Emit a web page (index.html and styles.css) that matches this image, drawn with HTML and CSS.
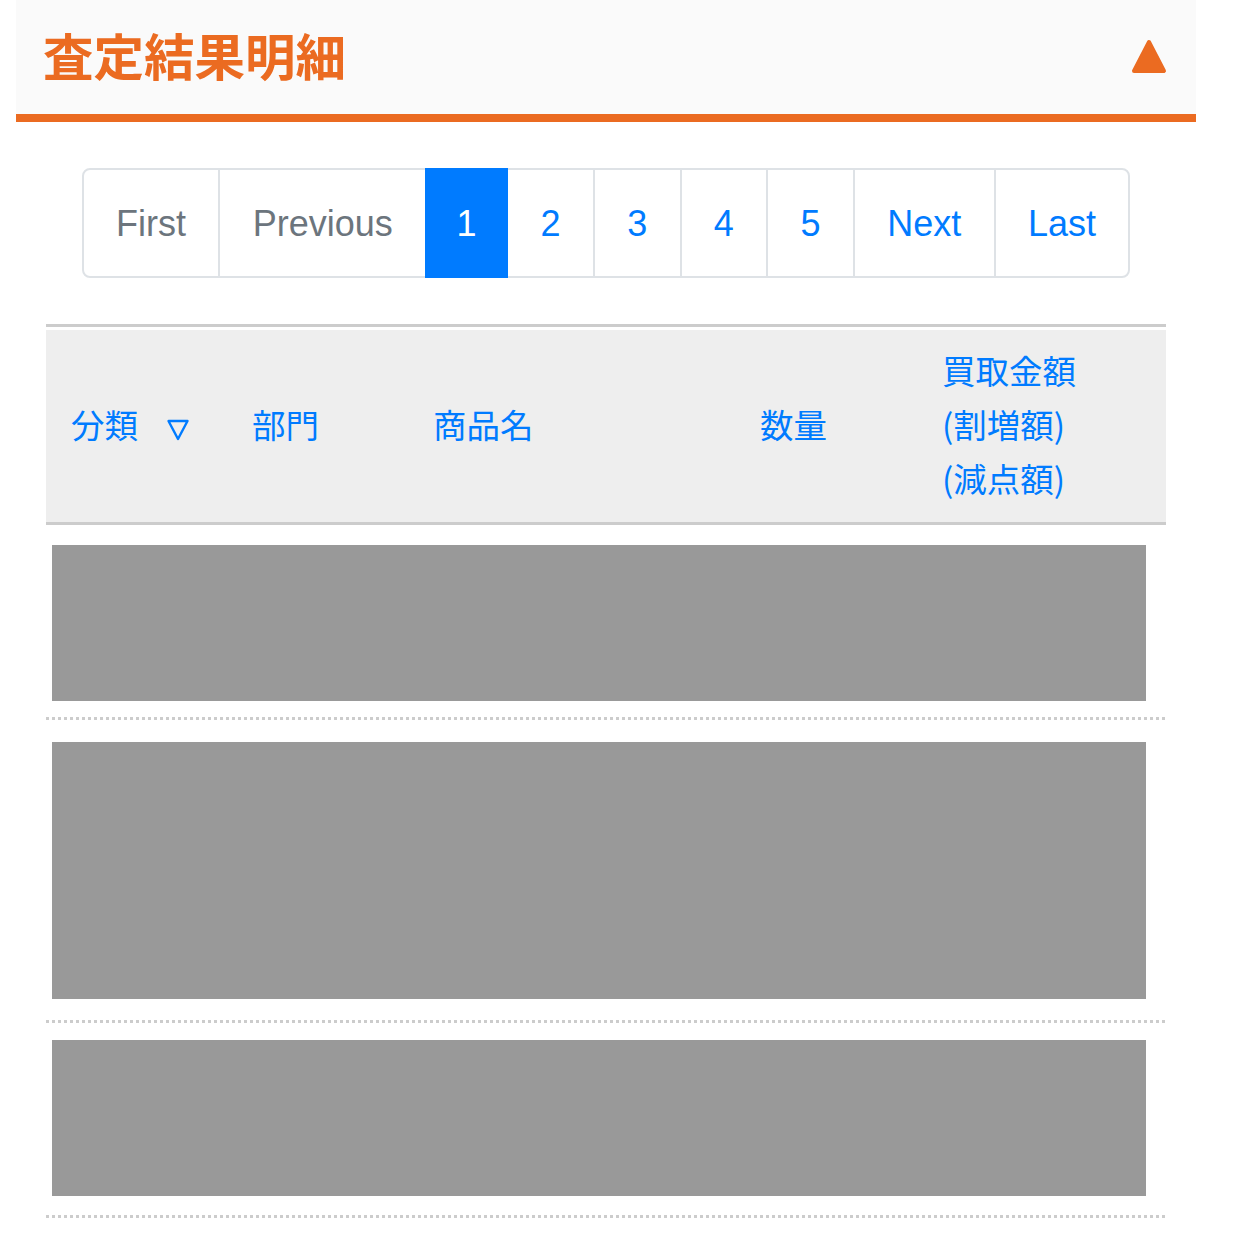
FILE: index.html
```html
<!DOCTYPE html>
<html lang="ja">
<head>
<meta charset="utf-8">
<title>査定結果明細</title>
<link rel="stylesheet" href="styles.css">
</head>
<body>
<div class="page">
  <div class="panel-head">
    <h2 class="panel-title">査定結果明細</h2>
    <svg class="toggle" width="36" height="36" viewBox="0 0 36 36" aria-hidden="true">
      <polygon points="18,4 33,33 3,33" fill="#eb6b21" stroke="#eb6b21" stroke-width="4" stroke-linejoin="round"/>
    </svg>
  </div>

  <nav class="pager-wrap">
    <ul class="pager">
      <li class="page-item disabled first"><span class="page-link">First</span></li>
      <li class="page-item disabled"><span class="page-link">Previous</span></li>
      <li class="page-item active"><span class="page-link">1</span></li>
      <li class="page-item"><span class="page-link">2</span></li>
      <li class="page-item"><span class="page-link">3</span></li>
      <li class="page-item"><span class="page-link">4</span></li>
      <li class="page-item"><span class="page-link">5</span></li>
      <li class="page-item"><span class="page-link">Next</span></li>
      <li class="page-item last"><span class="page-link">Last</span></li>
    </ul>
  </nav>

  <div class="table">
    <div class="thead">
      <div class="thead-row">
        <div class="th">分類<svg class="sort" width="24" height="24" viewBox="0 0 24 24" aria-hidden="true"><polygon points="2.5,3 21.5,3 12,21" fill="none" stroke="#007bff" stroke-width="2.4" stroke-linejoin="round"/></svg></div>
        <div class="th">部門</div>
        <div class="th">商品名</div>
        <div class="th">数量</div>
        <div class="th multi">買取金額<br>(割増額)<br>(減点額)</div>
      </div>
    </div>
    <div class="tbody">
      <div class="row row-a"><div class="placeholder ph-short"></div></div>
      <div class="row row-b"><div class="placeholder ph-tall"></div></div>
      <div class="row row-c"><div class="placeholder ph-short"></div></div>
    </div>
  </div>
</div>
</body>
</html>
```

FILE: styles.css
```css
html, body {
  margin: 0;
  padding: 0;
  background: #ffffff;
}

body {
  font-family: "Noto Sans CJK JP", "Noto Sans", sans-serif;
}

.page {
  width: 1180px;
  margin-left: 16px;
}

.panel-head {
  height: 114px;
  background: #fafafa;
  border-bottom: 8px solid #eb6b21;
  display: flex;
  align-items: center;
  justify-content: space-between;
  padding: 0 28px 0 27px;
  box-sizing: content-box;
  width: calc(1180px - 55px);
}

.panel-title {
  margin: 0;
  font-family: "Noto Sans CJK JP", sans-serif;
  font-weight: 700;
  font-size: 50.5px;
  line-height: 1;
  color: #eb6b21;
  letter-spacing: 0;
  position: relative;
  top: -3px;
}

.toggle {
  display: block;
  margin-right: 1px;
  position: relative;
  top: -1px;
}

.pager-wrap {
  display: flex;
  justify-content: center;
  margin-top: 46px;
}

.pager {
  display: flex;
  list-style: none;
  margin: 0;
  padding: 0;
}

.page-item {
  margin-left: -2px;
  position: relative;
}

.page-item.first {
  margin-left: 0;
}

.page-link {
  display: block;
  font-family: "Liberation Sans", Arial, sans-serif;
  font-size: 36px;
  line-height: 47px;
  padding: 30px 32.35px 29px 32.35px;
  border: 2px solid #dee2e6;
  background: #ffffff;
  color: #007bff;
}

.page-item.first .page-link {
  border-radius: 8px 0 0 8px;
}

.page-item.last .page-link {
  border-radius: 0 8px 8px 0;
}

.page-item.disabled .page-link {
  color: #6c757d;
}

.page-item.active {
  z-index: 1;
}

.page-item.active .page-link {
  background: #007bff;
  border-color: #007bff;
  color: #ffffff;
  padding-left: 29.5px;
  padding-right: 29.5px;
}

.table {
  margin: 46px 30px 0 30px;
}

.thead {
  border-top: 3px solid #cccccc;
  padding-top: 3px;
}

.thead-row {
  display: grid;
  grid-template-columns: 181px 181px 327px 183px 1fr;
  background: #eeeeee;
  border-bottom: 3px solid #cccccc;
  padding: 13px 0 17px 0;
  align-items: center;
}

.th {
  padding-left: 25px;
  font-size: 33.5px;
  line-height: 54px;
  color: #007bff;
  display: flex;
  align-items: center;
}

.th.multi {
  display: block;
  padding-left: 24px;
}

.sort {
  display: block;
  margin-left: 28px;
  position: relative;
  top: 6px;
}

.row {
  padding-left: 6px;
  padding-right: 20px;
  background-image: linear-gradient(to right, #cccccc 0, #cccccc 3px, transparent 3px, transparent 6px);
  background-size: 6px 3px;
  background-repeat: repeat-x;
  background-position: left bottom;
}

.row-a {
  padding-top: 20px;
  padding-bottom: 19px;
}

.row-b {
  padding-top: 22px;
  padding-bottom: 24px;
}

.row-c {
  padding-top: 17px;
  padding-bottom: 22px;
}

.placeholder {
  background: #999999;
}

.ph-short {
  height: 156px;
}

.ph-tall {
  height: 257px;
}
```
